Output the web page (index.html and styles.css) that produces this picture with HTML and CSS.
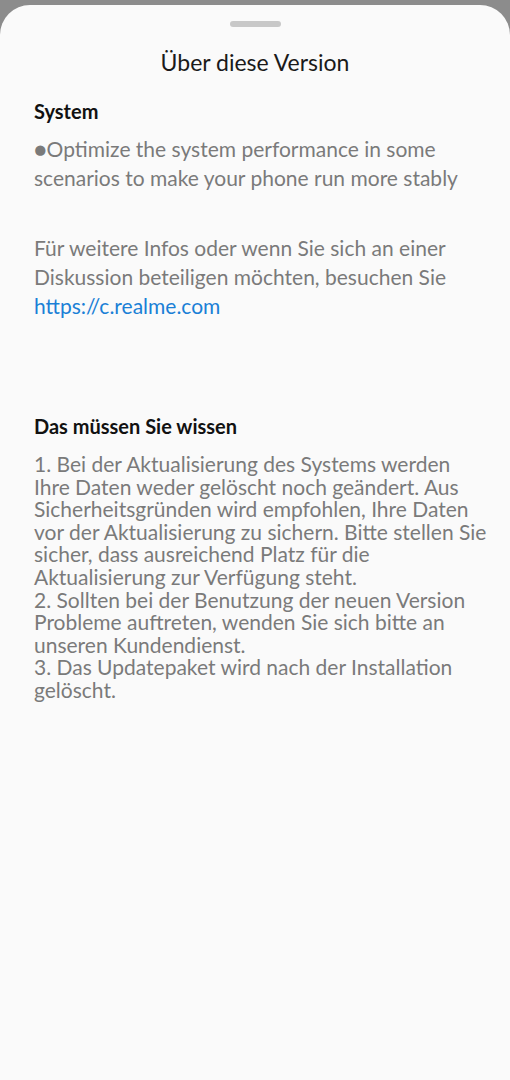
FILE: index.html
```html
<!DOCTYPE html>
<html lang="de">
<head>
  <meta charset="UTF-8">
  <meta name="viewport" content="width=device-width, initial-scale=1.0">
  <title>Über diese Version</title>
  <link rel="stylesheet" href="styles.css">
</head>
<body>
  <div class="sheet">
    <div class="handle"></div>
    <h1 class="title">Über diese Version</h1>

    <section class="block">
      <h2>System</h2>
      <p class="notes">●Optimize the system performance in some scenarios to make your phone run more stably</p>
      <p class="notes more">Für weitere Infos oder wenn Sie sich an einer Diskussion beteiligen möchten, besuchen Sie <a href="#">https://c.realme.com</a></p>
    </section>

    <section class="block info">
      <h2>Das müssen Sie wissen</h2>
      <p class="list">1. Bei der Aktualisierung des Systems werden Ihre Daten weder gelöscht noch geändert. Aus Sicherheitsgründen wird empfohlen, Ihre Daten vor der Aktualisierung zu sichern. Bitte stellen Sie sicher, dass ausreichend Platz für die Aktualisierung zur Verfügung steht.<br>2. Sollten bei der Benutzung der neuen Version Probleme auftreten, wenden Sie sich bitte an unseren Kundendienst.<br>3. Das Updatepaket wird nach der Installation gelöscht.</p>
    </section>
  </div>
</body>
</html>
```

FILE: styles.css
```css
* {
  box-sizing: border-box;
}
body {
  margin: 0;
  background: #8c8c8c;
  font-family: Lato, 'Noto Sans', sans-serif;
  height: 1080px;
  overflow: hidden;
}
.sheet {
  margin-top: 5px;
  height: 1075px;
  background: #fafafa;
  border-radius: 30px 30px 0 0;
  padding: 16px 34px 0;
}
.handle {
  width: 51px;
  height: 6px;
  margin: 0 auto;
  border-radius: 3px;
  background: #c8c8c8;
}
.title {
  margin: 19px 0 0;
  text-align: center;
  font-size: 23px;
  font-weight: 400;
  line-height: 32px;
  color: #1a1a1a;
}
.block h2 {
  margin: 0;
  font-size: 20px;
  font-weight: 700;
  line-height: 28px;
  color: #111;
}
.block {
  margin-top: 19px;
}
.notes {
  margin: 9px 0 0;
  font-size: 21px;
  line-height: 29px;
  color: #7a7a7a;
}
.notes.more {
  margin-top: 41px;
}
.notes a {
  color: #1a80d6;
  text-decoration: none;
}
.block.info {
  margin-top: 92px;
}
.list {
  margin: 13px -12px 0 0;
  font-size: 21px;
  line-height: 22.6px;
  color: #7a7a7a;
}
```
